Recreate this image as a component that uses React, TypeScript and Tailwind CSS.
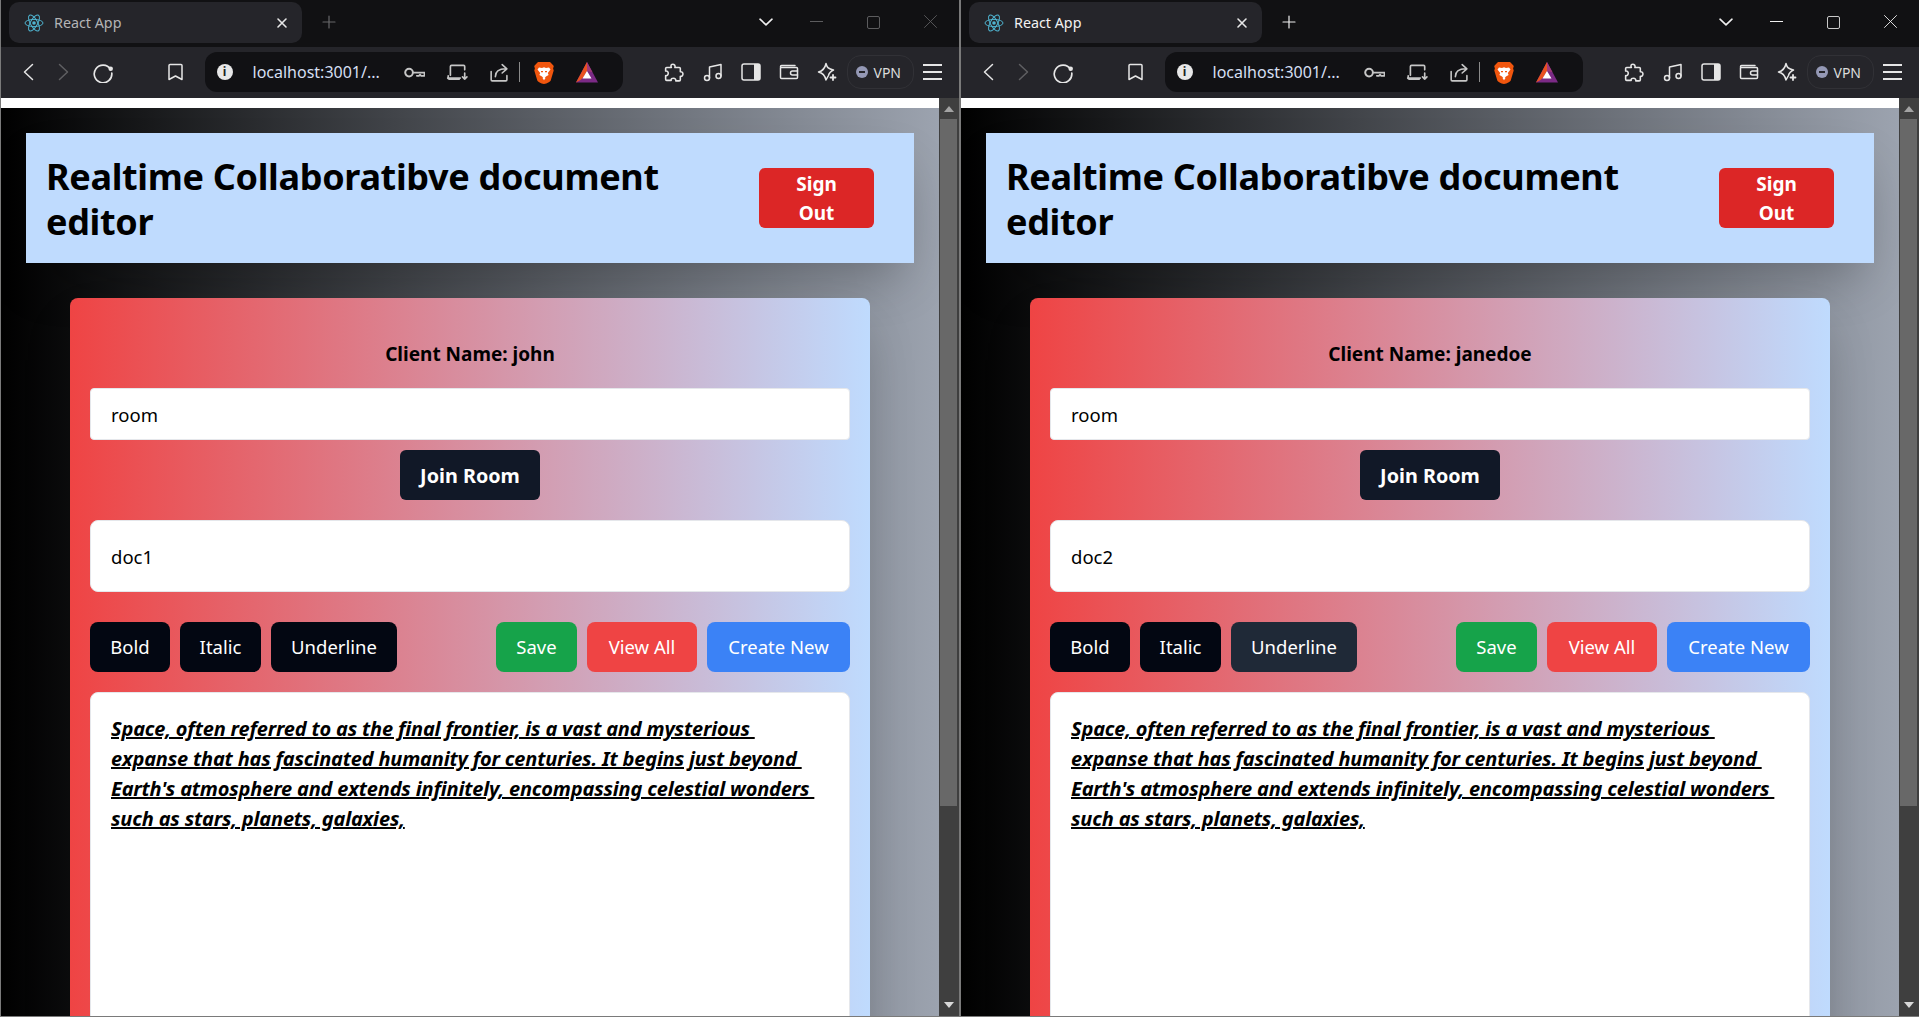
import type { ReactNode } from "react";

const FONT = "font-['Noto_Sans','Open_Sans',sans-serif]";

const DOC_LINES = [
  "Space, often referred to as the final frontier, is a vast and mysterious ",
  "expanse that has fascinated humanity for centuries. It begins just beyond ",
  "Earth's atmosphere and extends infinitely, encompassing celestial wonders ",
  "such as stars, planets, galaxies,",
];

// Small wrapper so the toolbar icons share the same stroke settings
function Stroke({ size = 20, className, children }: { size?: number; className?: string; children: ReactNode }) {
  return (
    <svg
      width={size}
      height={size}
      viewBox="0 0 20 20"
      fill="none"
      stroke="currentColor"
      strokeWidth="1.5"
      strokeLinecap="round"
      strokeLinejoin="round"
      className={`shrink-0 ${className ?? ""}`}
    >
      {children}
    </svg>
  );
}

function ReactLogo() {
  return (
    <svg width="20" height="20" viewBox="0 0 20 20" fill="none" stroke="#4fb3cf" strokeWidth="1" className="ml-[15px] shrink-0">
      <ellipse cx="10" cy="10" rx="9" ry="3.6" />
      <ellipse cx="10" cy="10" rx="9" ry="3.6" transform="rotate(60 10 10)" />
      <ellipse cx="10" cy="10" rx="9" ry="3.6" transform="rotate(120 10 10)" />
      <circle cx="10" cy="10" r="1.8" fill="#4fb3cf" stroke="none" />
    </svg>
  );
}

function BraveLogo() {
  return (
    <svg width="20" height="23" viewBox="0 0 20 23" className="ml-[14px] shrink-0">
      <path d="M4 1h12l1.5 1.6L19.8 5l-.7 2.6.6 1.8-3 10.2c-.5 1-3.6 3.4-6.7 3.4S3.800 20.600 3.300 19.600L.3 9.400.9 7.600.2 5l2.300-2.400z" fill="#f1560e" />
      <path d="M5 6.500l3 .6 2-.8 2 .8 3-.6 1.500 2-2.700 3.400.8 2.200-2.600 1.500L10 17.500l-2-1.900-2.600-1.500.8-2.200L3.500 8.500z" fill="#fff" />
      <path d="M8.500 17l1.500-1 1.500 1-1.500 2.200z" fill="#fff" />
      <path d="M7 10h2v1.200H7zM11 10h2v1.200h-2z" fill="#f1560e" />
    </svg>
  );
}

function BatLogo() {
  return (
    <svg width="22" height="21" viewBox="0 0 22 21" className="ml-[22px] shrink-0">
      <path d="M11 0L22 20.500H0z" fill="#7b2a85" />
      <path d="M11 0L3 15h4.500L11 9z" fill="#e9501f" />
      <path d="M0 20.500L3 15h4.500l-3 3z" fill="#e9501f" />
      <path d="M11 9l4.500 7.500h-9z" fill="#fff" />
      <path d="M11 0l5.500 10.200L11 9z" fill="#a03a7a" />
    </svg>
  );
}

function Toolbar({ active }: { active: boolean }) {
  return (
    <>
      {/* tab strip */}
      <div className="flex h-[47px] shrink-0 items-start bg-[#111113] pt-[2px]">
        <div className="ml-[8px] flex h-[41px] w-[293px] items-center rounded-[10px] bg-[#25252a]">
          <ReactLogo />
          <span className={active ? "ml-[10px] text-[14.3px] text-[#f2f2f2]" : "ml-[10px] text-[14.3px] text-[#b4b4b6]"}>React App</span>
          <Stroke size={16} className="ml-auto mr-[12px] text-[#e8e8e8]">
            <path d="M5 5l10 10M15 5L5 15" strokeWidth="2" />
          </Stroke>
        </div>
        <Stroke size={16} className={active ? "ml-[19px] mt-[12px] text-[#f0f0f0]" : "ml-[19px] mt-[12px] text-[#68686a]"}>
          <path d="M10 2.500v15M2.500 10h15" />
        </Stroke>
        <Stroke size={16} className="ml-auto mt-[12px] text-[#f0f0f0]">
          <path d="M2.500 6.500L10 13.500l7.500-7" strokeWidth="2" />
        </Stroke>
        <div className={active ? "ml-[36px] mt-[19px] h-[1px] w-[13px] bg-[#f0f0f0]" : "ml-[36px] mt-[19px] h-[1px] w-[13px] bg-[#5c5c5e]"} />
        <div className={active ? "ml-[44px] mt-[14px] h-[13px] w-[13px] rounded-[2px] border border-[#c8c8c8]" : "ml-[44px] mt-[14px] h-[13px] w-[13px] rounded-[2px] border border-[#5c5c5e]"} />
        <Stroke size={15} className={active ? "ml-[43px] mr-[21px] mt-[12px] text-[#f0f0f0]" : "ml-[43px] mr-[21px] mt-[12px] text-[#5c5c5e]"}>
          <path d="M2 2l16 16M18 2L2 18" strokeWidth="1.2" />
        </Stroke>
      </div>

      {/* address bar row */}
      <div className="flex h-[51px] shrink-0 items-center bg-[#25252a] pb-[1px] text-[#e6e6e6]">
        <Stroke size={20} className="ml-[18px]">
          <path d="M13.500 2.500L5.500 10l8 7.500" />
        </Stroke>
        <Stroke size={20} className="ml-[14px] text-[#5f5f62]">
          <path d="M6.500 2.500l8 7.500-8 7.500" />
        </Stroke>
        <Stroke size={22} className="ml-[19px]">
          <path d="M16.800 7.500A8 8 0 1 0 18 11" />
          <circle cx="17" cy="7" r="1.300" fill="currentColor" />
        </Stroke>
        <Stroke size={20} className="ml-[52px]">
          <path d="M4 2.500h11c.6 0 1 .4 1 1v14l-6.500-3.500L3 17.500v-14c0-.6.400-1 1-1z" />
        </Stroke>

        <div className="ml-[18.500px] flex h-[40px] w-[418px] items-center rounded-[12px] bg-[#111114]">
          <div className="ml-[12px] flex h-[16px] w-[16px] shrink-0 items-center justify-center rounded-full bg-[#e8e8e8] text-[12px] font-bold leading-none text-[#222]">
            i
          </div>
          <span className="ml-[20px] w-[135px] text-[16px] text-[#d5dff2]">localhost:3001/...</span>
          <Stroke size={22} className="ml-[15px] text-[#c6c6c6]">
            <circle cx="5.500" cy="10.500" r="3.500" strokeWidth="1.800" />
            <path d="M9 10.500h10.500v3h-3l-1-1.200-1 1.200h-2" strokeWidth="1.500" />
          </Stroke>
          <Stroke size={22} className="ml-[21px] text-[#c6c6c6]">
            <path d="M4 13V5c0-.6.400-1 1-1h11c.6 0 1 .4 1 1v3M1.500 15.500h11.500" />
            <path d="M2 13.500v2c0 .6.400 1 1 1h9M17 11v5.500M15 14.500l2 2 2-2" />
          </Stroke>
          <Stroke size={21} className="ml-[20px] text-[#c6c6c6]">
            <path d="M18 13v4c0 .6-.4 1-1 1H4c-.6 0-1-.4-1-1V9M7 14c0-5 3.500-7.500 10-7.500M13.500 2.500L18 6.500l-4.500 4" />
          </Stroke>
          <div className="ml-[10px] h-[20px] w-[1px] shrink-0 bg-[#8a8a8a]" />
          <BraveLogo />
          <BatLogo />
        </div>

        <Stroke size={21} className="ml-[40px]">
          <path d="M8 2.500c1.500-1 3.500 0 3.500 1.800 0 .4 0 .7-.2 1h4.200c.6 0 1 .4 1 1v3c1.500-.3 2.500.8 2.500 2.200s-1 2.500-2.500 2.200v3.300c0 .6-.4 1-1 1h-3.300c.3-1.500-.8-2.500-2.200-2.500S7.500 16 7.800 17.500H3.500c-.6 0-1-.4-1-1V13c1.500.3 2.500-.8 2.500-2.200S4 8.300 2.500 8.600V6.300c0-.6.400-1 1-1H8c-.6-1-.6-2 0-2.800z" />
        </Stroke>
        <Stroke size={20} className="ml-[19px]">
          <circle cx="4" cy="16" r="2.500" />
          <circle cx="15.500" cy="14" r="2.500" />
          <path d="M6.500 16V5L18 2.500V14" />
        </Stroke>
        <svg width="20" height="18" viewBox="0 0 20 18" className="ml-[18px] shrink-0">
          <rect x="1" y="1" width="18" height="16" rx="2" fill="none" stroke="currentColor" strokeWidth="1.500" />
          <rect x="13" y="1" width="6" height="16" fill="currentColor" />
        </svg>
        <Stroke size={20} className="ml-[18px]">
          <path d="M1.500 5.500v10c0 .6.400 1 1 1h15c.6 0 1-.4 1-1v-9c0-.6-.4-1-1-1H2.500c-.6 0-1-.4-1-1s.4-1 1-1H16" />
          <path d="M18.500 9h-5a2 2 0 0 0 0 4h5" />
        </Stroke>
        <Stroke size={20} className="ml-[18px]">
          <path d="M9 1.500c1 4 2.500 5.500 7.500 6.500-3 1.500-4.500 3-5 5.500l-2.500 4.500c-1-4.500-3-7-7.500-8 4-1 6.500-3.500 7.500-8.500z" />
          <path d="M16 13v5M13.500 15.500h5" strokeWidth="1.800" />
        </Stroke>
        <div className="ml-[10px] flex h-[34px] w-[67px] shrink-0 items-center rounded-[14px] border border-[#313136]">
          <div className="ml-[8px] flex h-[12px] w-[12px] items-center justify-center rounded-full bg-[#9498b5]">
            <div className="h-[2px] w-[6px] bg-[#25252a]" />
          </div>
          <span className="ml-[6px] text-[14px] text-[#dcdcdc]">VPN</span>
        </div>
        <div className="ml-[9px] flex w-[19px] shrink-0 flex-col gap-[5.500px]">
          <div className="h-[1.500px] bg-[#e6e6e6]" />
          <div className="h-[1.500px] bg-[#e6e6e6]" />
          <div className="h-[1.500px] bg-[#e6e6e6]" />
        </div>
      </div>
    </>
  );
}

function Scrollbar() {
  return (
    <div className="flex w-[20px] shrink-0 flex-col bg-[#3f3f3f] pl-[1px] pr-[2px]">
      <div className="flex h-[21px] shrink-0 items-center justify-center">
        <div className="h-0 w-0 border-x-[5px] border-b-[6px] border-x-transparent border-b-[#a3a3a3]" />
      </div>
      <div className="h-[687px] shrink-0 bg-[#686868]" />
      <div className="mt-auto flex h-[22px] shrink-0 items-center justify-center">
        <div className="h-0 w-0 border-x-[5px] border-t-[6px] border-x-transparent border-t-[#d8d8d8]" />
      </div>
    </div>
  );
}

function ToolButton({ label, className }: { label: string; className: string }) {
  return (
    <button className={`h-[50px] rounded-[8px] text-[18.5px] text-white ${className}`}>{label}</button>
  );
}

function EditorPage({ clientName, docName, underlineHover }: { clientName: string; docName: string; underlineHover: boolean }) {
  return (
    <div className="min-w-0 flex-1 overflow-hidden">
      <div className="h-[10px] bg-white" />
      <div className="h-full bg-linear-to-r/srgb from-[#000000] to-[#9ca3af] px-[25px] pt-[25px]">
        <header className="flex h-[130px] items-center justify-between bg-[#bfdbfe] pl-[20px] pr-[40px] shadow-2xl">
          <h1 className="w-[680px] pt-[2px] text-[36px] font-bold leading-[45px] tracking-[-0.33px] text-black">
            Realtime Collaboratibve document editor
          </h1>
          <button className="h-[60px] w-[115px] rounded-[6px] bg-[#dc2626] px-[20px] pt-[2px] text-[19px] font-bold leading-[29px] text-white">
            Sign Out
          </button>
        </header>

        <main className="mx-auto mt-[35px] w-[800px] rounded-[8px] bg-linear-to-r/srgb from-[#ef4444] to-[#bfdbfe] px-[20px] pb-[40px] pt-[42px] shadow-2xl">
          <p className="mb-[20px] text-center text-[19px] font-bold leading-[28px] text-black">Client Name: {clientName}</p>

          <div className="flex h-[52px] items-center rounded-[4px] border border-gray-200 bg-white px-[20px] pt-[1px] text-[18.5px] text-black">
            room
          </div>
          <div className="mt-[10px] flex justify-center">
            <button className="h-[50px] w-[140px] rounded-[6px] bg-[#111827] pt-[1px] text-[19.8px] font-bold text-white">Join Room</button>
          </div>

          <div className="mt-[20px] flex h-[72px] items-center rounded-[8px] border border-gray-200 bg-white px-[20px] pt-[1px] text-[18.5px] text-black">
            {docName}
          </div>

          <div className="mt-[30px] flex items-center justify-between">
            <div className="flex gap-[10px]">
              <ToolButton label="Bold" className="w-[80px] bg-[#030712]" />
              <ToolButton label="Italic" className="w-[81px] bg-[#030712]" />
              <ToolButton label="Underline" className={underlineHover ? "w-[126px] bg-[#1f2937]" : "w-[126px] bg-[#030712]"} />
            </div>
            <div className="flex gap-[10px]">
              <ToolButton label="Save" className="w-[81px] bg-[#16a34a]" />
              <ToolButton label="View All" className="w-[110px] bg-[#ef4444]" />
              <ToolButton label="Create New" className="w-[143px] bg-[#3b82f6]" />
            </div>
          </div>

          <div className="mt-[20px] h-[500px] rounded-[8px] border border-gray-200 bg-white px-[20px] py-[21px] text-[20px] font-bold italic leading-[30px] tracking-[-0.18px] text-black underline">
            {DOC_LINES.map((line) => (
              <div key={line} className="whitespace-pre">
                {line}
              </div>
            ))}
          </div>
        </main>
      </div>
    </div>
  );
}

function BrowserWindow({ clientName, docName, active, className }: { clientName: string; docName: string; active: boolean; className: string }) {
  return (
    <section className={`flex h-full flex-col border-b border-l border-[#7a7a7a] ${className}`}>
      <Toolbar active={active} />
      <div className="flex min-h-0 flex-1">
        <EditorPage clientName={clientName} docName={docName} underlineHover={active} />
        <Scrollbar />
      </div>
    </section>
  );
}

export default function App() {
  return (
    <div className={`flex h-screen overflow-hidden bg-black ${FONT}`}>
      <BrowserWindow clientName="john" docName="doc1" active={false} className="w-[960px] border-r" />
      <BrowserWindow clientName="janedoe" docName="doc2" active className="w-[959px]" />
    </div>
  );
}
